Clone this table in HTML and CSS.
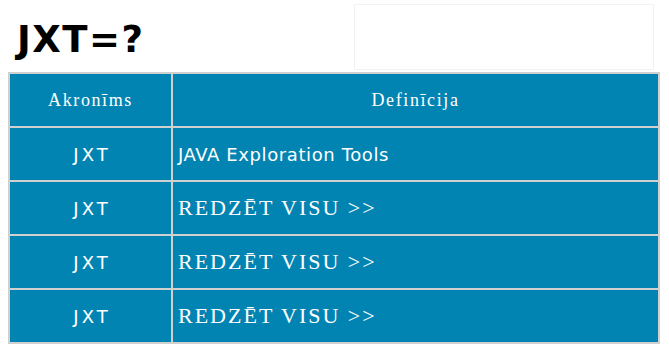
FILE: index.html
```html
<!DOCTYPE html>
<html lang="lv">
<head>
<meta charset="utf-8">
<title>JXT=?</title>
<link rel="stylesheet" href="styles.css">
</head>
<body>
<div class="top">
  <h1 class="title">JXT=?</h1>
  <div class="ad"></div>
</div>
<table class="acro">
  <thead>
    <tr><th class="c1">Akronīms</th><th class="c2">Definīcija</th></tr>
  </thead>
  <tbody>
    <tr><td class="abbr">JXT</td><td class="def comic">JAVA Exploration Tools</td></tr>
    <tr><td class="abbr">JXT</td><td class="def serif">REDZĒT VISU &gt;&gt;</td></tr>
    <tr><td class="abbr">JXT</td><td class="def serif">REDZĒT VISU &gt;&gt;</td></tr>
    <tr><td class="abbr">JXT</td><td class="def serif">REDZĒT VISU &gt;&gt;</td></tr>
  </tbody>
</table>
</body>
</html>
```
FILE: styles.css
```css
body {
  margin: 0;
  background: #fff;
  font-family: "DejaVu Sans", sans-serif;
}
.top {
  display: flex;
  justify-content: space-between;
  align-items: flex-start;
  height: 72px;
}
.title {
  margin: 20px 0 0 17px;
  font-family: "DejaVu Sans", sans-serif;
  font-weight: bold;
  font-size: 37px;
  letter-spacing: 1.5px;
  line-height: 40px;
  color: #000;
}
.ad {
  width: 298px;
  height: 64px;
  margin: 4px 15px 0 0;
  border: 1px solid #f2f2f2;
}
.acro {
  margin-left: 8px;
  width: 652px;
  border-collapse: collapse;
  background: #0284b3;
  color: #fff;
}
.acro th, .acro td {
  border: 2px solid #d0d0d0;
  padding: 0;
}
.acro th {
  height: 52px;
  font-family: "Liberation Serif", serif;
  font-weight: normal;
  font-size: 18px;
  letter-spacing: 1.6px;
  text-align: center;
}
.c1 { width: 161px; }
.acro td { height: 52px; }
.abbr {
  text-align: center;
  font-family: "DejaVu Sans", sans-serif;
  font-size: 18px;
  letter-spacing: 3px;
  text-indent: 3px;
}
.acro td.def { padding-left: 5px; }
.comic {
  font-family: "DejaVu Sans", sans-serif;
  font-size: 18px;
  letter-spacing: 0.6px;
}
.serif {
  font-family: "Liberation Serif", serif;
  font-size: 22px;
  letter-spacing: 2px;
  padding-bottom: 6px;
}
```
